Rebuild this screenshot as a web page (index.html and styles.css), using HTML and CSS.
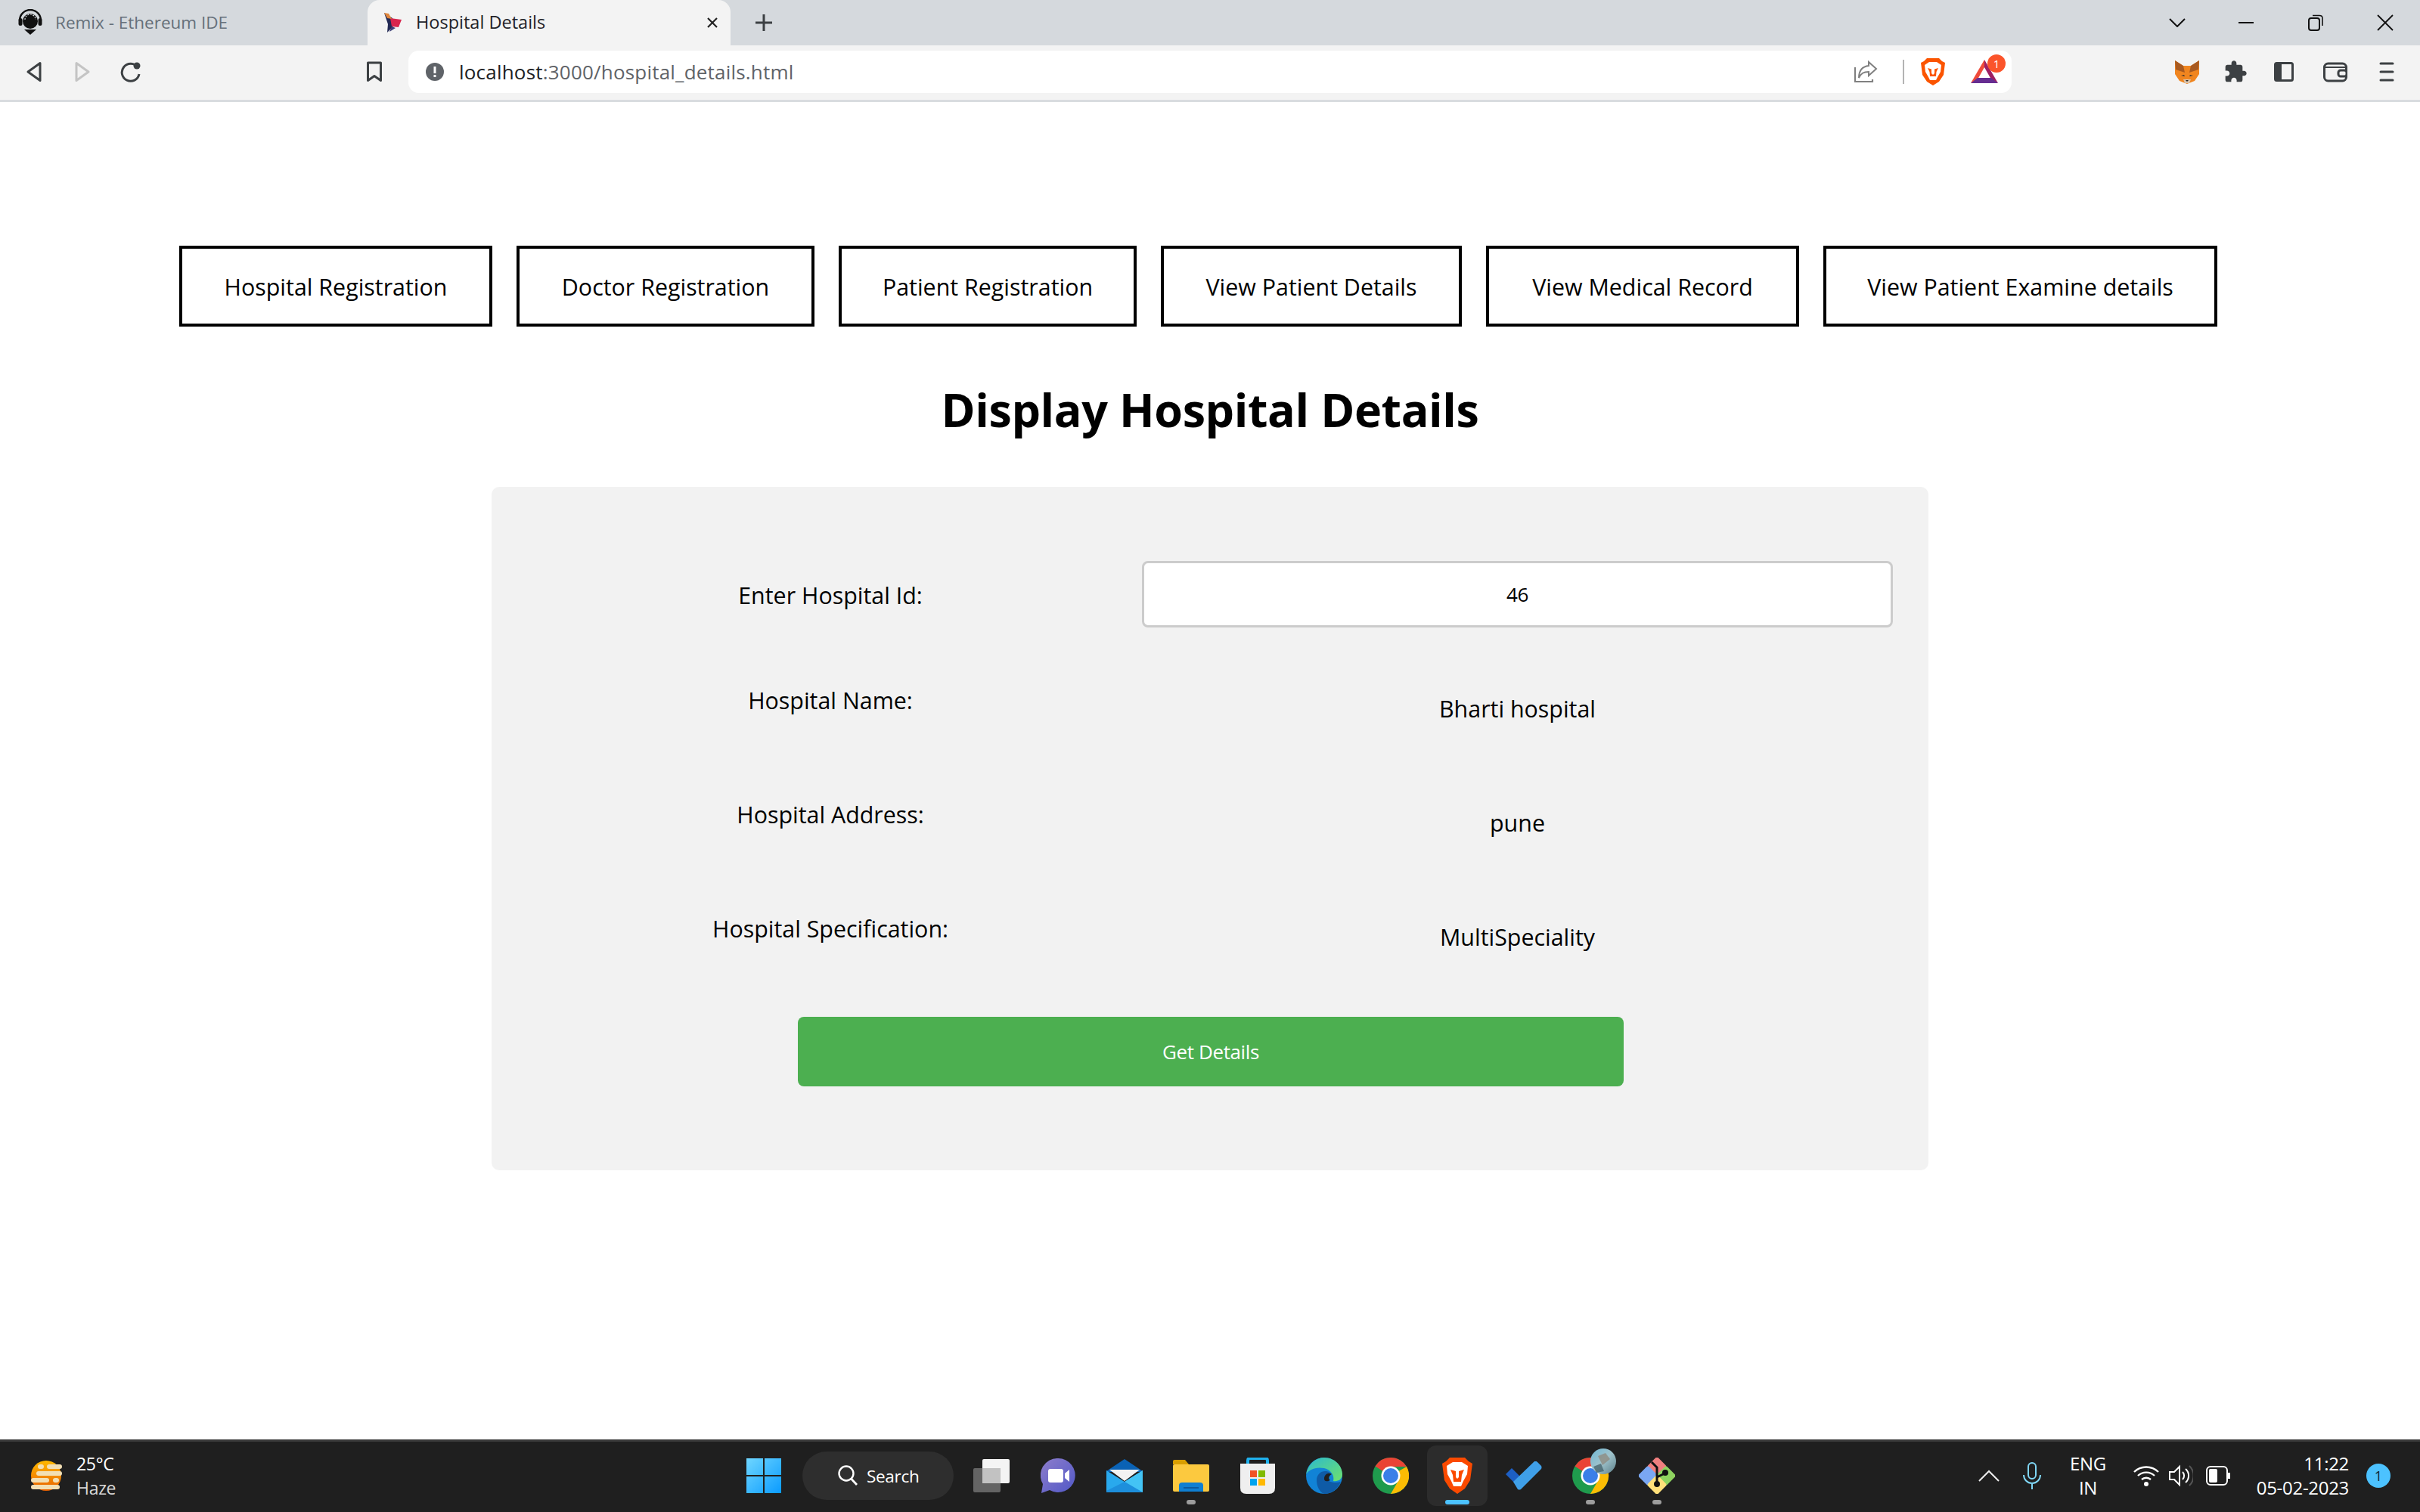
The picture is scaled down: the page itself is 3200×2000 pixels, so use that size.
FILE: index.html
```html
<!DOCTYPE html>
<html lang="en">
<head>
<meta charset="utf-8">
<title>Hospital Details</title>
<link rel="stylesheet" href="styles.css">
</head>
<body>
<header class="browser">
  <div class="tabstrip">
    <div class="tab tab-idle">
      <svg class="favicon" width="36" height="36" viewBox="0 0 36 36"><path d="M4 15 A14 14 0 0 1 32 15" fill="none" stroke="#111" stroke-width="2.400"/><circle cx="18" cy="16" r="10" fill="#111"/><path d="M11 14a7 7 0 0 1 14 0" fill="none" stroke="#d5d9dd" stroke-width="1.200" stroke-dasharray="2 1.600"/><rect x="2.500" y="12" width="5" height="10" rx="2.500" fill="#111"/><rect x="28.500" y="12" width="5" height="10" rx="2.500" fill="#111"/><path d="M10 27 L26 27 L18 34 Z" fill="#111"/></svg>
      <span class="tab-title tab-title-idle">Remix - Ethereum IDE</span>
    </div>
    <div class="tab tab-active">
      <svg class="favicon" width="28" height="30" viewBox="0 0 28 30"><path d="M2 2 L13 9 L14 20 L6 28 L7 17 Z" fill="#232a55"/><path d="M10 9 L25 11 L21 21 L12 20 Z" fill="#d8264d"/><path d="M2 2 L8 3 L12 10 L6 9 Z" fill="#e0863c"/><path d="M12 20 L17 22 L9 27 Z" fill="#3c3f78"/></svg>
      <span class="tab-title tab-title-active">Hospital Details</span>
      <svg class="tab-close" width="16" height="16" viewBox="0 0 16 16"><path d="M2 2 L14 14 M14 2 L2 14" stroke="#222" stroke-width="2.200"/></svg>
    </div>
    <div class="cell cell-new">
      <svg width="24" height="24" viewBox="0 0 24 24"><path d="M12 1 V23 M1 12 H23" stroke="#3c4043" stroke-width="3"/></svg>
    </div>
    <div class="winctl">
      <div class="cell cell-chev"><svg width="22" height="12" viewBox="0 0 22 12"><path d="M1 1 L11 11 L21 1" fill="none" stroke="#111" stroke-width="2"/></svg></div>
      <div class="cell cell-win"><svg width="20" height="4" viewBox="0 0 20 4"><path d="M0 2 H20" stroke="#111" stroke-width="2"/></svg></div>
      <div class="cell cell-win"><svg width="20" height="22" viewBox="0 0 20 22"><rect x="1" y="5" width="14" height="16" rx="3" fill="none" stroke="#111" stroke-width="2"/><path d="M6 1.500 H15 Q19 1.500 19 5 V15" fill="none" stroke="#111" stroke-width="1.600"/></svg></div>
      <div class="cell cell-win"><svg width="22" height="22" viewBox="0 0 22 22"><path d="M1 1 L21 21 M21 1 L1 21" stroke="#111" stroke-width="1.800"/></svg></div>
    </div>
  </div>
  <div class="toolbar">
    <div class="cell cell-nav"><svg width="22" height="28" viewBox="0 0 22 28"><path d="M19 2.500 L3 14 L19 25.500 Z" fill="none" stroke="#3c4043" stroke-width="3" stroke-linejoin="round"/></svg></div>
    <div class="cell cell-nav"><svg width="22" height="28" viewBox="0 0 22 28"><path d="M3 2.500 L19 14 L3 25.500 Z" fill="none" stroke="#c4c4c4" stroke-width="3" stroke-linejoin="round"/></svg></div>
    <div class="cell cell-nav"><svg width="30" height="28" viewBox="0 0 30 28"><path d="M24 8 A11.500 11.500 0 1 0 26 17" fill="none" stroke="#3c4043" stroke-width="3"/><circle cx="23" cy="6" r="4.500" fill="#3c4043"/></svg></div>
    <div class="cell cell-mark"><svg width="22" height="28" viewBox="0 0 22 28"><path d="M2.500 2 H19.500 V25.500 L11 19.500 L2.500 25.500 Z" fill="none" stroke="#3c4043" stroke-width="3" stroke-linejoin="round"/></svg></div>
    <div class="omnibox">
      <svg class="info" width="24" height="24" viewBox="0 0 24 24"><circle cx="12" cy="12" r="12" fill="#5f6368"/><rect x="10.500" y="5" width="3" height="9" fill="#fff"/><rect x="10.500" y="16" width="3" height="3" fill="#fff"/></svg>
      <span class="url"><span class="url-host">localhost</span>:3000/hospital_details.html</span>
      <div class="omni-end">
        <div class="cell cell-share"><svg width="32" height="30" viewBox="0 0 32 30"><path d="M2 9 V28 H25 V25" fill="none" stroke="#808080" stroke-width="2.200"/><path d="M20 2 L30 11 L20 20 V15 C13 15 10 17 7 23 C7 14 11 8 20 7 Z" fill="none" stroke="#808080" stroke-width="2"/></svg></div>
        <span class="omni-divider"></span>
        <div class="cell cell-lion"><svg width="32" height="36" viewBox="0 0 32 36"><path d="M8 0 H24 L28 4 L32 6 L30 22 L24 31 L16 36 L8 31 L2 22 L0 6 L4 4 Z" fill="#fb5400"/><path d="M5 9 L11 5 H21 L27 9 L26 18 L22 25 L20 29 H12 L10 25 L6 18 Z" fill="#fff"/><path d="M9 13 L14 14.500 V20 L16 22 L18 20 V14.500 L23 13 L20.500 18 L20 24 H12 L11.500 18 Z" fill="#fb5400"/><path d="M12 24 H20 L16 27 Z" fill="#fff"/></svg></div>
        <div class="cell cell-bat">
          <svg width="36" height="32" viewBox="0 0 36 32"><path d="M18 0 L0 31 L9 26 L18 10 Z" fill="#ef4b3a"/><path d="M18 0 L36 31 L27 26 L18 10 Z" fill="#9e1f63"/><path d="M0 31 H36 L27 24 H9 Z" fill="#662d91"/></svg>
          <span class="bat-badge">1</span>
        </div>
      </div>
    </div>
    <div class="cell cell-ext"><svg width="34" height="32" viewBox="0 0 34 32"><path d="M1 1 L12 8 H22 L33 1 L33 19 L27 28 L17 32 L7 28 L1 19 Z" fill="#f0851f"/><path d="M1 1 L12 8 L14 17 L2 13 Z M33 1 L22 8 L20 17 L32 13 Z" fill="#a85a20"/><path d="M12 26 H22 L20 31 H14 Z" fill="#d8c3ad"/><path d="M15 27 H19 L17 29 Z" fill="#222"/><path d="M9 21 L13 20 L14 22 Z M25 21 L21 20 L20 22 Z" fill="#33302e"/></svg></div>
    <div class="cell cell-ext"><svg width="32" height="32" viewBox="0 0 24 24"><path fill="#3c4043" d="M20.500 11H19V7c0-1.100-.9-2-2-2h-4V3.500C13 2.120 11.880 1 10.500 1S8 2.120 8 3.500V5H4c-1.100 0-1.990.9-1.990 2v3.800H3.500c1.490 0 2.700 1.210 2.700 2.700s-1.210 2.700-2.700 2.700H2V20c0 1.100.9 2 2 2h3.800v-1.500c0-1.490 1.210-2.700 2.700-2.700 1.490 0 2.700 1.210 2.700 2.700V22H17c1.100 0 2-.9 2-2v-4h1.500c1.380 0 2.500-1.120 2.500-2.500S21.880 11 20.500 11z"/></svg></div>
    <div class="cell cell-ext"><svg width="26" height="26" viewBox="0 0 26 26"><rect x="1.500" y="1.500" width="23" height="23" rx="2" fill="none" stroke="#3c4043" stroke-width="3"/><rect x="2" y="2" width="8" height="22" fill="#3c4043"/></svg></div>
    <div class="cell cell-wallet"><svg width="32" height="28" viewBox="0 0 32 28"><rect x="1.500" y="3" width="29" height="23" rx="5" fill="none" stroke="#3c4043" stroke-width="3"/><path d="M3 8 H30" stroke="#3c4043" stroke-width="2"/><rect x="20" y="12" width="11" height="8" rx="3" fill="#f2f2f2" stroke="#3c4043" stroke-width="3"/></svg></div>
    <div class="cell cell-ext"><svg width="20" height="26" viewBox="0 0 20 26"><path d="M2 2 H18 M2 13 H18 M2 24 H18" stroke="#3c4043" stroke-width="3" stroke-linecap="round"/></svg></div>
  </div>
</header>

<main class="page">
  <nav class="navrow">
    <a class="navbtn">Hospital Registration</a>
    <a class="navbtn">Doctor Registration</a>
    <a class="navbtn">Patient Registration</a>
    <a class="navbtn">View Patient Details</a>
    <a class="navbtn">View Medical Record</a>
    <a class="navbtn">View Patient Examine details</a>
  </nav>
  <h1 class="title">Display Hospital Details</h1>
  <form class="card">
    <div class="fields">
      <label class="label label-mid">Enter Hospital Id:</label>
      <input class="idinput" type="text" value="46">
      <span class="label">Hospital Name:</span>
      <span class="value">Bharti hospital</span>
      <span class="label">Hospital Address:</span>
      <span class="value">pune</span>
      <span class="label">Hospital Specification:</span>
      <span class="value">MultiSpeciality</span>
    </div>
    <button class="submit" type="button">Get Details</button>
  </form>
</main>

<footer class="taskbar">
  <div class="weather">
    <svg width="48" height="44" viewBox="0 0 48 44"><defs><linearGradient id="sun" x1="0" y1="0" x2="0" y2="1"><stop offset="0" stop-color="#ffb900"/><stop offset="1" stop-color="#e85f00"/></linearGradient></defs><circle cx="25" cy="22" r="20" fill="url(#sun)"/><g fill="#f2dfb4"><rect x="26" y="7" width="20" height="6" rx="3"/><rect x="14" y="7" width="8" height="6" rx="3"/><rect x="12" y="16" width="34" height="6" rx="3"/><rect x="5" y="25" width="24" height="6" rx="3"/><rect x="34" y="25" width="8" height="6" rx="3"/><rect x="5" y="34" width="38" height="6" rx="3"/></g></svg>
    <div class="weather-text"><span class="temp">25°C</span><span class="sky">Haze</span></div>
  </div>
  <div class="cell cell-task"><svg width="46" height="46" viewBox="0 0 46 46"><defs><linearGradient id="win" x1="0" y1="0" x2="1" y2="1"><stop offset="0" stop-color="#6fd6ff"/><stop offset="1" stop-color="#0a9bff"/></linearGradient></defs><path d="M0 0 H22 V22 H0 Z M24 0 H46 V22 H24 Z M0 24 H22 V46 H0 Z M24 24 H46 V46 H24 Z" fill="url(#win)"/></svg></div>
  <div class="searchpill">
    <svg width="30" height="30" viewBox="0 0 30 30"><circle cx="13" cy="12" r="9.500" fill="none" stroke="#fff" stroke-width="2.400"/><path d="M19.500 19 L27 27" stroke="#fff" stroke-width="2.800"/></svg>
    <span class="search-text">Search</span>
  </div>
  <div class="apps">
    <div class="cell cell-app"><svg width="48" height="44" viewBox="0 0 48 44"><rect x="12" y="0" width="36" height="32" rx="2" fill="#f4f4f4"/><rect x="0" y="12" width="36" height="32" rx="2" fill="#6b6b6b" opacity=".9"/><rect x="12" y="12" width="24" height="20" fill="#c2c2c2"/></svg></div>
    <div class="cell cell-app"><svg width="46" height="46" viewBox="0 0 46 46"><defs><linearGradient id="teams" x1="0" y1="0" x2="1" y2="1"><stop offset="0" stop-color="#8d7dcb"/><stop offset="1" stop-color="#5158c7"/></linearGradient></defs><path d="M23 0 A22.500 22.500 0 1 1 12 42 L1 46 L3 34 A22.500 22.500 0 0 1 23 0 Z" fill="url(#teams)"/><rect x="10" y="14" width="20" height="18" rx="3" fill="#fff"/><path d="M32 20 L38 15 V31 L32 26 Z" fill="#fff"/></svg></div>
    <div class="cell cell-app"><svg width="48" height="44" viewBox="0 0 48 44"><path d="M24 0 L48 16 V17 H0 V16 Z" fill="#0a62b5"/><path d="M4 14 H44 L24 29 Z" fill="#f2f2f2"/><path d="M0 15 L24 30 L48 15 V44 H0 Z" fill="#29a9ed"/><path d="M24 30 L48 15 V44 Z" fill="#43c4f5"/><path d="M0 44 V42 L24 30 L48 44 Z" fill="#1d8fdc"/></svg></div>
    <div class="cell cell-app"><svg width="48" height="44" viewBox="0 0 48 44"><path d="M0 3 Q0 1 2 1 H16 L21 7 H0 Z" fill="#d99e00"/><rect x="0" y="7" width="48" height="36" rx="2" fill="#fcc93f"/><path d="M8 43 V35 Q8 31 12 31 H36 Q40 31 40 35 V43 Z" fill="#0f7fd2"/><path d="M14 38 H34" stroke="#0b5a9e" stroke-width="2"/></svg><span class="run-dot"></span></div>
    <div class="cell cell-app"><svg width="46" height="48" viewBox="0 0 46 48"><path d="M10 12 V4 Q10 1 13 1 H33 Q36 1 36 4 V12" fill="none" stroke="#1fb1ee" stroke-width="4"/><path d="M0 8 H46 V40 Q46 48 38 48 H8 Q0 48 0 40 Z" fill="#efefef"/><rect x="13" y="17" width="9" height="9" fill="#f25325"/><rect x="24" y="17" width="9" height="9" fill="#80bb00"/><rect x="13" y="28" width="9" height="9" fill="#00a4ef"/><rect x="24" y="28" width="9" height="9" fill="#ffb900"/></svg></div>
    <div class="cell cell-app"><svg width="48" height="48" viewBox="0 0 48 48"><defs><linearGradient id="edge" x1="0" y1="0" x2="1" y2="1"><stop offset="0" stop-color="#2bb9cf"/><stop offset="1" stop-color="#6fe26c"/></linearGradient></defs><circle cx="24" cy="24" r="24" fill="#1183d6"/><path d="M0 22 C3 8 13 0 24 0 C38 0 48 11 48 22 C48 29 42 32 36 31 C38 24 33 16 24 14 C12 12 4 16 0 22 Z" fill="url(#edge)"/><path d="M14 30 C14 20 24 15 32 20 C25 21 24 28 30 31 C36 34 42 33 46 32 C42 42 33 48 24 48 C18 46 14 38 14 30 Z" fill="#0f5ba6"/><path d="M24 28 C24 22 30 19 34 22 C30 24 29 28 32 30 C28 32 24 32 24 28Z" fill="#1f1f1f"/></svg></div>
    <div class="cell cell-app"><svg width="48" height="48" viewBox="0 0 48 48"><circle cx="24" cy="24" r="24" fill="#1f9b4d"/><path d="M24 0 A24 24 0 0 1 45 12 H24 A12 12 0 0 0 13.600 18 L3.500 11.500 A24 24 0 0 1 24 0 Z" fill="#ea4335"/><path d="M45 12 A24 24 0 0 1 24 48 L34.400 30 A12 12 0 0 0 34.400 18 Z" fill="#fbbc04"/><circle cx="24" cy="24" r="12.500" fill="#fff"/><circle cx="24" cy="24" r="10" fill="#3a7fe8"/></svg></div>
    <div class="cell cell-app cell-current">
      <svg width="40" height="48" viewBox="0 0 40 48"><path d="M10 0 H30 L35 5 L40 8 L37 30 L30 41 L20 48 L10 41 L3 30 L0 8 L5 5 Z" fill="#fb4a00"/><path d="M6 11 L14 6 H26 L34 11 L33 22 L28 31 L25 38 H15 L12 31 L7 22 Z" fill="#fff"/><path d="M11 16 L18 18 V26 L20 28 L22 26 V18 L29 16 L26 23 L25 32 H15 L14 23 Z" fill="#fb4a00"/><path d="M15 32 H25 L20 36 Z" fill="#fff"/></svg>
      <span class="run-current"></span>
    </div>
    <div class="cell cell-app"><svg width="48" height="38" viewBox="0 0 48 38"><path d="M0 17 L8 9 L21 22 L13 30 Z" fill="#1d5fc4"/><path d="M10 27 L38 0 Q40 -1 42 1 L47 6 Q48 8 47 10 L20 37 Q18 38 16 37 Z" fill="#3f9fe8"/></svg></div>
    <div class="cell cell-app cell-open">
      <svg width="68" height="60" viewBox="0 0 68 60"><circle cx="24" cy="36" r="24" fill="#1f9b4d"/><path d="M24 12 A24 24 0 0 1 45 24 H24 A12 12 0 0 0 13.600 30 L3.500 23.500 A24 24 0 0 1 24 12 Z" fill="#ea4335"/><path d="M45 24 A24 24 0 0 1 24 60 L34.400 42 A12 12 0 0 0 34.400 30 Z" fill="#fbbc04"/><circle cx="24" cy="36" r="12.500" fill="#fff"/><circle cx="24" cy="36" r="10" fill="#3a7fe8"/><defs><linearGradient id="ava" x1="0" y1="0" x2="1" y2="1"><stop offset="0" stop-color="#6fb7d4"/><stop offset=".5" stop-color="#9fc3cc"/><stop offset="1" stop-color="#5d7f88"/></linearGradient></defs><circle cx="41" cy="17" r="17" fill="url(#ava)"/><path d="M34 10 L44 6 L50 14 L40 22 Z" fill="#8d8577" opacity=".7"/><path d="M28 24 L38 20 L42 30 L32 32 Z" fill="#3d5a63" opacity=".7"/></svg>
      <span class="run-dot"></span>
    </div>
    <div class="cell cell-app">
      <svg width="48" height="48" viewBox="0 0 48 48"><rect x="14.500" y="2.500" width="19" height="19" rx="2.500" transform="rotate(45 24 12)" fill="#f07f7f"/><rect x="2.500" y="14.500" width="19" height="19" rx="2.500" transform="rotate(45 12 24)" fill="#7aa7f3"/><rect x="26.500" y="14.500" width="19" height="19" rx="2.500" transform="rotate(45 36 24)" fill="#8ed35f"/><rect x="14.500" y="26.500" width="19" height="19" rx="2.500" transform="rotate(45 24 36)" fill="#ffe07a"/><path d="M17 6 L24 13 V34 M24 26 L36 20" fill="none" stroke="#111" stroke-width="3"/><circle cx="24" cy="35" r="4" fill="#111"/><circle cx="35" cy="20" r="4" fill="#111"/></svg>
      <span class="run-dot"></span>
    </div>
  </div>
  <div class="tray">
    <div class="cell cell-caret"><svg width="28" height="16" viewBox="0 0 28 16"><path d="M1 15 L14 2 L27 15" fill="none" stroke="#eee" stroke-width="2"/></svg></div>
    <div class="cell cell-mic"><svg width="24" height="36" viewBox="0 0 24 36"><rect x="7" y="1" width="10" height="21" rx="5" fill="none" stroke="#7fd6f5" stroke-width="2"/><path d="M1 17 A11 11 0 0 0 23 17 M12 28 V36" fill="none" stroke="#7fd6f5" stroke-width="2"/></svg></div>
    <div class="lang"><span>ENG</span><span>IN</span></div>
    <div class="cell cell-tray"><svg width="34" height="28" viewBox="0 0 34 28"><path d="M1 9 A23 23 0 0 1 33 9 M6 14 A16 16 0 0 1 28 14 M11 19 A9 9 0 0 1 23 19" fill="none" stroke="#fff" stroke-width="2.400"/><circle cx="17" cy="25" r="3" fill="#fff"/></svg></div>
    <div class="cell cell-tray"><svg width="32" height="32" viewBox="0 0 32 32"><path d="M1 11 H7 L14 4 V28 L7 21 H1 Z" fill="none" stroke="#fff" stroke-width="2"/><path d="M18 11 A7 7 0 0 1 18 21 M22 7 A12 12 0 0 1 22 25" fill="none" stroke="#fff" stroke-width="2"/><path d="M27 3 A18 18 0 0 1 27 29" fill="none" stroke="#555" stroke-width="2"/></svg></div>
    <div class="cell cell-batt"><svg width="32" height="26" viewBox="0 0 32 26"><rect x="1" y="1" width="27" height="24" rx="5" fill="none" stroke="#fff" stroke-width="2"/><rect x="4" y="4" width="11" height="18" rx="2" fill="#fff"/><rect x="29" y="9" width="3" height="8" fill="#fff"/></svg></div>
    <div class="clock"><span>11:22</span><span>05-02-2023</span></div>
    <span class="notif">1</span>
  </div>
</footer>
</body>
</html>
```

FILE: styles.css
```css
* { box-sizing: border-box; }
html, body { margin: 0; height: 100%; }
body {
  width: 3200px;
  height: 2000px;
  overflow: hidden;
  display: flex;
  flex-direction: column;
  background: #fff;
  color: #000;
  font-family: "Open Sans", "Noto Sans", sans-serif;
}
.cell { display: flex; align-items: center; justify-content: center; flex: none; }

/* browser chrome */
.browser { flex: none; }
.tabstrip { display: flex; height: 60px; background: #d5d9dd; }
.tab { display: flex; align-items: center; flex: none; }
.tab-idle { width: 486px; padding-left: 22px; gap: 15px; }
.tab-active { width: 480px; padding-left: 20px; gap: 16px; background: #f3f3f3; border-radius: 16px 16px 0 0; }
.tab-title { padding-bottom: 2px; font-size: 22.500px; color: #1f2329; white-space: nowrap; }
.tab-title-active { font-size: 23.500px; }
.tab-title-idle { color: #66707a; }
.tab-close { margin-left: auto; margin-right: 16px; }
.cell-new { width: 88px; }
.winctl { display: flex; margin-left: auto; }
.cell-chev { width: 91px; }
.cell-win { width: 92px; }
.toolbar { display: flex; align-items: center; height: 75px; padding: 0 0 3px 13px; background: #f3f3f3; border-bottom: 3px solid #d9dcdf; }
.cell-nav { width: 64px; height: 100%; }
.cell-mark { width: 46px; height: 100%; margin-left: 267px; }
.omnibox { display: flex; align-items: center; flex: none; width: 2120px; height: 56px; margin-left: 22px; margin-right: 200px; padding-left: 23px; background: #fff; border-radius: 14px; }
.info { flex: none; }
.url { margin-left: 20px; font-size: 26px; letter-spacing: 0.2px; color: #5f6368; white-space: nowrap; }
.url-host { color: #202124; }
.omni-end { display: flex; align-items: center; margin-left: auto; height: 100%; }
.cell-share { width: 40px; }
.omni-divider { width: 2px; height: 32px; margin: 0 22px 0 29px; background: #b3b3b3; }
.cell-lion { width: 32px; }
.cell-bat { position: relative; width: 36px; margin: 0 18px 0 34px; }
.bat-badge { position: absolute; top: -7px; right: -10px; width: 24px; height: 24px; border-radius: 50%; background: #fb542b; color: #fff; font-size: 15px; line-height: 24px; text-align: center; }
.cell-ext { width: 64px; height: 100%; }
.cell-wallet { width: 72px; height: 100%; }

/* page */
.page { flex: 1; min-height: 0; padding-top: 190px; }
.navrow { display: grid; grid-template-columns: 414px 394px 394px 398px 414px 521px; column-gap: 32px; margin-left: 237px; width: fit-content; }
.navbtn { display: flex; align-items: center; justify-content: center; height: 107px; border: 4px solid #000; font-size: 30.400px; white-space: nowrap; padding-top: 2px; }
.title { margin: 67px 0 57px; height: 88px; font-size: 61px; line-height: 86px; font-weight: 700; letter-spacing: -0.4px; text-align: center; }
.card { width: 1900px; height: 904px; margin: 0 auto; padding: 98px 47px 0 48px; background: #f2f2f2; border-radius: 10px; }
.fields { display: grid; grid-template-columns: 800px 993px; grid-template-rows: 88px 75px 75px 75px; column-gap: 12px; row-gap: 76px; justify-items: center; }
.label { font-size: 30.400px; line-height: 42px; }
.label-mid { align-self: center; padding-top: 3px; }
.value { font-size: 30.400px; line-height: 44px; padding-top: 10px; }
.idinput { width: 100%; height: 88px; padding: 0 20px; border: 3px solid #ccc; border-radius: 8px; background: #fff; font: 400 26px "Open Sans", sans-serif; letter-spacing: -0.4px; color: #000; text-align: center; outline: none; }
.submit { display: block; width: 1092px; height: 92px; margin: 62px 0 0 357px; border: 0; border-radius: 8px; background: #4caf50; color: #fff; font: 400 26px "Open Sans", sans-serif; letter-spacing: -0.4px; }

/* taskbar */
.taskbar { flex: none; display: flex; align-items: center; height: 96px; padding-bottom: 3px; background: #1f1f1f; border-top: 3px solid #3a3a3a; color: #fff; }
.weather { display: flex; align-items: center; width: 966px; height: 100%; padding-left: 36px; gap: 17px; flex: none; }
.weather-text { display: flex; flex-direction: column; padding-bottom: 1px; font-size: 23px; line-height: 32px; letter-spacing: -0.3px; }
.sky { color: #d8d8d8; }
.cell-task { width: 88px; }
.searchpill { display: flex; align-items: center; width: 200px; height: 64px; margin-left: 7px; margin-right: 6px; padding-left: 45px; gap: 10px; flex: none; background: #2e2e2e; border-radius: 32px; }
.search-text { font-size: 22.500px; letter-spacing: -0.3px; }
.apps { display: flex; flex: none; }
.cell-app { position: relative; width: 88px; height: 80px; }
.cell-current { width: 80px; margin: 0 4px; background: #2c2c2c; border-radius: 12px; }
.run-current { position: absolute; left: 24px; bottom: 2px; width: 32px; height: 6px; border-radius: 3px; background: #4cc2ff; }
.run-dot { position: absolute; left: 38px; bottom: 2px; width: 12px; height: 6px; border-radius: 3px; background: #9d9d9d; }
.cell-open svg { margin: -12px -20px 0 0; }
.tray { display: flex; align-items: center; margin-left: auto; padding-right: 39px; height: 100%; flex: none; }
.cell-caret { width: 74px; }
.cell-mic { width: 40px; }
.lang { display: flex; flex-direction: column; align-items: center; width: 108px; font-size: 24px; line-height: 32px; letter-spacing: -0.3px; }
.cell-tray { width: 46px; }
.cell-batt { width: 52px; }
.clock { display: flex; flex-direction: column; align-items: flex-end; width: 147px; font-size: 24px; line-height: 32px; letter-spacing: -0.3px; }
.notif { width: 32px; height: 32px; margin-left: 23px; border-radius: 50%; background: #4cc2ff; color: #10222c; font-size: 18px; line-height: 32px; text-align: center; }
```
